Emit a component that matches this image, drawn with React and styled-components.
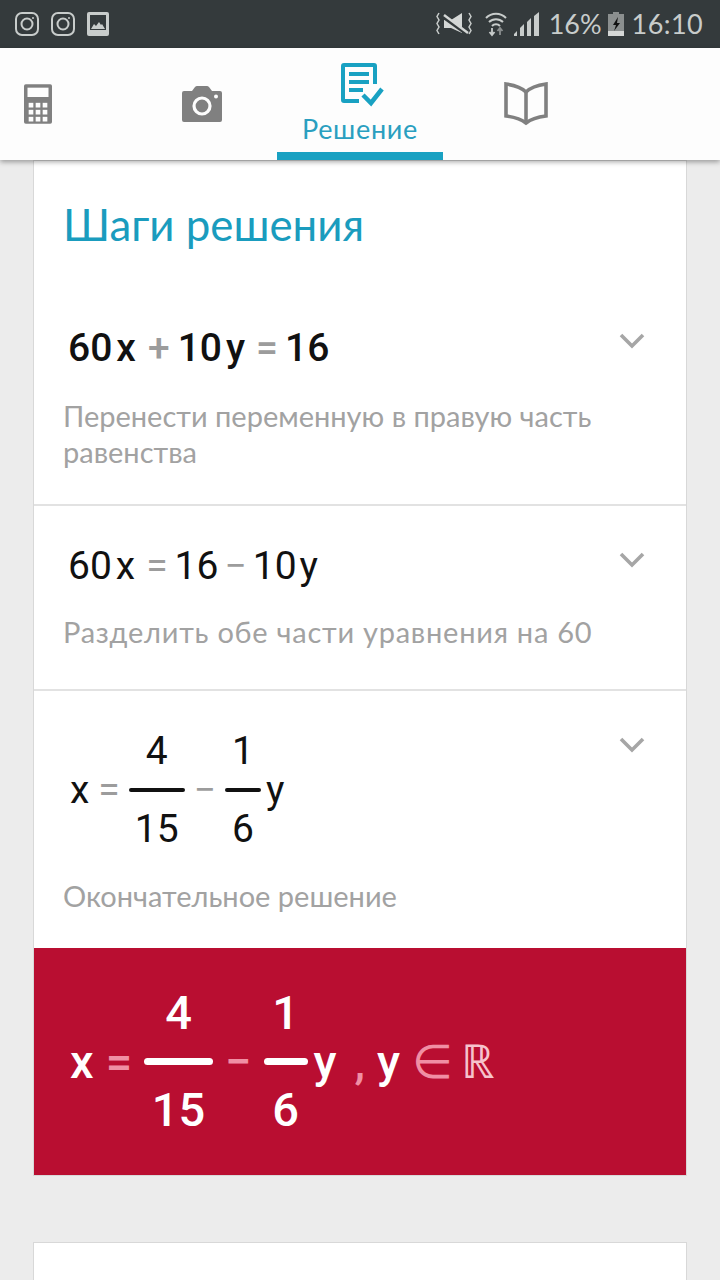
import styled, { createGlobalStyle } from "styled-components";

const hand = `"Lato", "Noto Sans", sans-serif`;
const mathFont = `"Roboto", "Liberation Sans", sans-serif`;

const GlobalStyle = createGlobalStyle`
  html, body {
    margin: 0;
    padding: 0;
    background: #ececec;
  }
  * {
    box-sizing: border-box;
  }
`;

const Page = styled.div`
  width: 720px;
  height: 1280px;
  overflow: hidden;
  background: #ececec;
`;

const StatusBar = styled.div`
  height: 48px;
  background: #343a3c;
  display: flex;
  align-items: center;
  justify-content: space-between;
  padding: 0 17px 0 15px;
  color: #c8cccb;
`;

const StatusGroup = styled.div`
  display: flex;
  align-items: center;
  gap: 12px;
`;

const StatusRight = styled.div`
  display: flex;
  align-items: center;
`;

const StatusSlot = styled.span`
  display: inline-flex;
  margin-left: ${(props) => props.$left || 0}px;
`;

const StatusText = styled.span`
  font-family: ${hand};
  font-size: 27px;
  line-height: 48px;
  letter-spacing: ${(props) => props.$spacing || 0}px;
  color: #c8cccb;
  margin-left: ${(props) => props.$left || 0}px;
`;

const Header = styled.div`
  position: relative;
  z-index: 2;
  height: 112px;
  background: #fdfdfd;
  display: flex;
  box-shadow: 0 2px 5px rgba(0, 0, 0, 0.35);
`;

const Tab = styled.div`
  width: ${(props) => props.$width}px;
  margin-left: ${(props) => props.$offset || 0}px;
  display: flex;
  flex-direction: column;
  align-items: center;
  justify-content: ${(props) => (props.$active ? "flex-start" : "center")};
  padding-top: ${(props) => (props.$active ? 15 : 0)}px;
  border-bottom: ${(props) => (props.$active ? "8px solid #19a1c2" : "none")};
`;

const TabIcon = styled.span`
  display: inline-flex;
  margin-left: 6px;
`;

const TabLabel = styled.span`
  font-family: ${hand};
  font-size: 27px;
  line-height: 32px;
  letter-spacing: 0.7px;
  color: #2a9fc0;
  margin-top: 6px;
`;

const Card = styled.div`
  width: 654px;
  margin: 0 33px;
  background: #fff;
  border: 1px solid #d8d8d8;
`;

const Title = styled.h1`
  margin: 0;
  padding: 38px 0 0 29px;
  height: 104px;
  font-family: ${hand};
  font-weight: 400;
  font-size: 43.8px;
  line-height: 50px;
  color: #1a9cbe;
`;

const Step = styled.div`
  position: relative;
  height: ${(props) => props.$height}px;
  padding: ${(props) => props.$top}px 30px 0 29px;
  border-bottom: ${(props) => (props.$last ? "none" : "2px solid #e2e2e2")};
`;

const Chevron = styled.svg`
  position: absolute;
  right: 41px;
  top: ${(props) => props.$top}px;
  width: 26px;
  height: 16px;
`;

const MathLine = styled.div`
  display: flex;
  align-items: center;
  padding-left: ${(props) => props.$indent || 0}px;
  font-family: ${mathFont};
  font-size: ${(props) => props.$size || 39}px;
  font-weight: ${(props) => props.$weight || 400};
  line-height: 46px;
  color: ${(props) => props.$color || "#111"};
  white-space: pre;
`;

const Op = styled.span`
  color: ${(props) => props.$color || "#9c9c9c"};
  margin: 0 ${(props) => props.$space ?? 7}px;
  font-weight: ${(props) => props.$weight || "inherit"};
`;

const Fraction = styled.span`
  display: inline-flex;
  flex-direction: column;
  align-items: center;
  width: ${(props) => props.$width}px;
`;

const FractionPart = styled.span`
  line-height: ${(props) => props.$height}px;
  height: ${(props) => props.$height}px;
`;

const FractionBar = styled.span`
  width: 100%;
  height: ${(props) => props.$thick}px;
  border-radius: ${(props) => props.$thick / 2}px;
  background: ${(props) => props.$color || "#111"};
`;

const Hint = styled.p`
  margin: ${(props) => props.$gap}px 0 0;
  font-family: ${hand};
  font-size: 29px;
  line-height: 36px;
  letter-spacing: ${(props) => props.$spacing || 0}px;
  color: #a2a2a2;
`;

const Answer = styled.div`
  height: 227px;
  background: #b90e31;
  padding: 0 0 0 36px;
  display: flex;
  align-items: center;
`;

const NextCard = styled(Card)`
  margin-top: 66px;
  height: 60px;
`;

function ChevronIcon({ top }) {
  return (
    <Chevron $top={top} viewBox="0 0 26 16" fill="none" stroke="#a6a6a6" strokeWidth="3.6">
      <path d="M2 2l11 11L24 2" />
    </Chevron>
  );
}

function InstagramIcon() {
  return (
    <svg width="24" height="24" viewBox="0 0 24 24" fill="none" stroke="#c8cccb" strokeWidth="2">
      <rect x="1" y="1" width="22" height="22" rx="6" />
      <circle cx="12" cy="12" r="5.5" />
      <circle cx="18" cy="6" r="1" fill="#c8cccb" stroke="none" />
    </svg>
  );
}

function PictureIcon() {
  return (
    <svg width="22" height="24" viewBox="0 0 22 24">
      <rect x="0" y="0" width="22" height="24" rx="2" fill="#c8cccb" />
      <rect x="3" y="3" width="16" height="15" fill="#343a3c" />
      <path d="M4 17l3-5 2 2 3-4 2 3 1-1 3 5z" fill="#c8cccb" />
    </svg>
  );
}

function MuteIcon() {
  return (
    <svg width="36" height="24" viewBox="0 0 36 24" fill="none" stroke="#c8cccb" strokeWidth="1.5">
      <path d="M3 1l-2 3.500 2 3.500-2 3.500 2 3.500-2 3.500 2 3.500M33 1l2 3.500-2 3.500 2 3.500-2 3.500 2 3.500-2 3.500" />
      <path d="M8 8h7l11-7v20L15 16H8z" fill="#d4d7d6" stroke="none" />
      <path d="M6 4l25 18" stroke="#343a3c" strokeWidth="3.500" />
      <path d="M8 3l24 18" stroke="#d4d7d6" strokeWidth="2.400" />
    </svg>
  );
}

function WifiIcon() {
  return (
    <svg width="22" height="26" viewBox="0 0 22 26" fill="none" stroke="#c8cccb" strokeWidth="2">
      <path d="M1 7a14 14 0 0 1 20 0M4 11a10 10 0 0 1 14 0M7 15a5.5 5.5 0 0 1 8 0" />
      <path d="M7 17v6M4.500 21l2.500 3 2.500-3" strokeWidth="1.8" />
      <path d="M15 24v-6M12.500 20l2.500-3 2.500 3" stroke="#8b8f8f" strokeWidth="1.8" />
    </svg>
  );
}

function SignalIcon() {
  return (
    <svg width="25" height="24" viewBox="0 0 25 24" fill="#c8cccb">
      <path d="M0 24v-2l3-3v5zM6 24v-8l4-4v12zM13 24V10l4-4v18zM20 24V4l5-4v24z" />
    </svg>
  );
}

function BatteryIcon() {
  return (
    <svg width="16" height="24" viewBox="0 0 16 24">
      <rect x="5" y="0" width="6" height="3" fill="#8b8f8f" />
      <rect x="0" y="2" width="16" height="22" fill="#8b8f8f" />
      <rect x="0" y="19" width="16" height="5" fill="#d5d7d6" />
      <path d="M10 5l-5 8h3l-2 6 6-8H9z" fill="#111" />
    </svg>
  );
}

function CalculatorIcon() {
  const keys = [];
  [16, 22, 28].forEach((y) =>
    [4, 10, 16].forEach((x) =>
      keys.push(<rect key={`${x}-${y}`} x={x} y={y} width="4" height="4" fill="#fdfdfd" />)
    )
  );
  return (
    <svg width="28" height="40" viewBox="0 0 24 34">
      <rect x="0" y="0" width="24" height="34" rx="1.500" fill="#808080" />
      <rect x="3" y="3" width="18" height="8" fill="#fdfdfd" />
      {keys}
    </svg>
  );
}

function CameraIcon() {
  return (
    <svg width="40" height="36" viewBox="0 0 40 36">
      <path
        d="M2 5h8l3-4q1-1 2-1h10q1 0 2 1l3 4h8q2 0 2 2v27q0 2-2 2H2q-2 0-2-2V7q0-2 2-2z"
        fill="#808080"
      />
      <circle cx="20" cy="20" r="8" fill="none" stroke="#fdfdfd" strokeWidth="3.200" />
      <circle cx="34" cy="10.500" r="2" fill="#fdfdfd" />
    </svg>
  );
}

function SolutionIcon() {
  return (
    <svg width="44" height="44" viewBox="0 0 44 44" fill="none" stroke="#19a1c2">
      <path d="M18 38H3a1 1 0 0 1-1-1V3a1 1 0 0 1 1-1h30a1 1 0 0 1 1 1v18" strokeWidth="4" />
      <path d="M8 11h20M8 19h20M8 27h14" strokeWidth="4" />
      <path d="M22 32l8 8 11-14" strokeWidth="4.500" />
    </svg>
  );
}

function BookIcon() {
  return (
    <svg width="44" height="44" viewBox="0 0 44 44" fill="none" stroke="#808080" strokeWidth="3.600" strokeLinejoin="miter">
      <path d="M22 10C17 5 9 3 2 2v32c8 1 15 3 20 7 5-4 12-6 20-7V2c-7 1-15 3-20 8z" />
      <path d="M22 10v30" />
    </svg>
  );
}

function FractionTerm({ top, bottom, width, height, thick, barColor }) {
  return (
    <Fraction $width={width}>
      <FractionPart $height={height}>{top}</FractionPart>
      <FractionBar $thick={thick} $color={barColor} />
      <FractionPart $height={height}>{bottom}</FractionPart>
    </Fraction>
  );
}

export default function App() {
  return (
    <Page>
      <GlobalStyle />
      <StatusBar>
        <StatusGroup>
          <InstagramIcon />
          <InstagramIcon />
          <PictureIcon />
        </StatusGroup>
        <StatusRight>
          <MuteIcon />
          <StatusSlot $left={13}>
            <WifiIcon />
          </StatusSlot>
          <StatusSlot $left={7}>
            <SignalIcon />
          </StatusSlot>
          <StatusText $left={10}>16%</StatusText>
          <StatusSlot $left={6}>
            <BatteryIcon />
          </StatusSlot>
          <StatusText $left={8} $spacing={0.4}>16:10</StatusText>
        </StatusRight>
      </StatusBar>
      <Header>
        <Tab $width={76}>
          <CalculatorIcon />
        </Tab>
        <Tab $width={150} $offset={51}>
          <CameraIcon />
        </Tab>
        <Tab $width={166} $active>
          <TabIcon>
            <SolutionIcon />
          </TabIcon>
          <TabLabel>Решение</TabLabel>
        </Tab>
        <Tab $width={166}>
          <BookIcon />
        </Tab>
      </Header>
      <Card>
        <Title>Шаги решения</Title>
        <Step $height={241} $top={60}>
          <MathLine $weight={500} $indent={5}>
            60
            <Op $color="#111" $space={4}>x</Op>
            <Op $space={8}>+</Op>
            10
            <Op $color="#111" $space={4}>y</Op>
            <Op $space={7}>=</Op>
            16
          </MathLine>
          <ChevronIcon top={68} />
          <Hint $gap={27}>Перенести переменную в правую часть равенства</Hint>
        </Step>
        <Step $height={185} $top={37}>
          <MathLine $indent={5}>
            60
            <Op $color="#111" $space={4}>x</Op>
            <Op $space={7}>=</Op>
            16
            <Op $space={6}>−</Op>
            10
            <Op $color="#111" $space={3}>y</Op>
          </MathLine>
          <ChevronIcon top={46} />
          <Hint $gap={25} $spacing={0.75}>Разделить обе части уравнения на 60</Hint>
        </Step>
        <Step $height={257} $top={23} $last>
          <MathLine $indent={7}>
            x
            <Op $space={9}>=</Op>
            <FractionTerm top="4" bottom="15" width={56} height={74} thick={4} />
            <Op $space={9}>−</Op>
            <FractionTerm top="1" bottom="6" width={36} height={74} thick={4} />
            <Op $color="#111" $space={5}>y</Op>
          </MathLine>
          <ChevronIcon top={46} />
          <Hint $gap={12}>Окончательное решение</Hint>
        </Step>
        <Answer>
          <MathLine $size={47} $weight={500} $color="#fff">
            x
            <Op $color="#f08fa4" $space={12}>=</Op>
            <FractionTerm top="4" bottom="15" width={69} height={90} thick={7} barColor="#fff" />
            <Op $color="#f08fa4" $space={12}>−</Op>
            <FractionTerm top="1" bottom="6" width={44} height={90} thick={7} barColor="#fff" />
            <Op $color="#fff" $space={6}>y</Op>
            <Op $color="#f08fa4" $space={12}>,</Op>
            y
            <Op $color="#f08fa4" $space={12} $weight={300}>∈</Op>
            <Op $color="#f6c2cd" $space={-4} $weight={400}>ℝ</Op>
          </MathLine>
        </Answer>
      </Card>
      <NextCard />
    </Page>
  );
}
